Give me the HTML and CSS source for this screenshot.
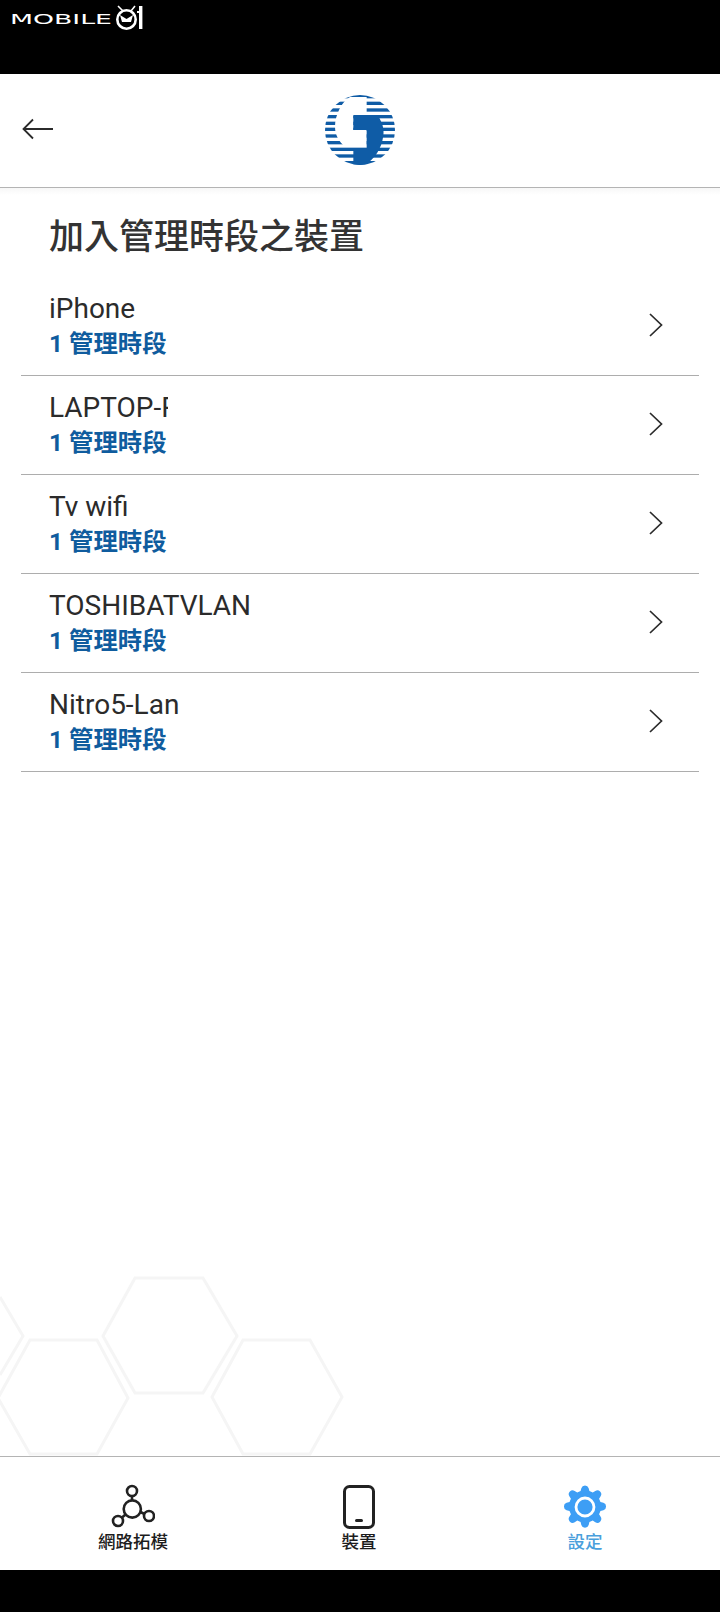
FILE: index.html
```html
<!DOCTYPE html>
<html lang="zh-Hant">

<head>
    <meta charset="UTF-8">
    <meta name="viewport" content="width=device-width, initial-scale=1.0">
    <title>加入管理時段之裝置</title>
    <link rel="stylesheet" href="styles.css">
</head>

<body>
    <div class="top-bar">
        <svg class="watermark" viewBox="0 0 145 32" width="145" height="32">
            <text x="10" y="23.5" class="watermark-text" textLength="102" lengthAdjust="spacingAndGlyphs">MOBILE</text>
            <circle cx="126.5" cy="19.5" r="9.2" fill="none" stroke="#fff" stroke-width="2.6"/>
            <path d="M118 6l5 5M135 6l-4 5" stroke="#fff" stroke-width="1.6" fill="none"/>
            <path d="M120 15l6.5 4 6.5-4-2 7h-9z" fill="#fff"/>
            <rect x="139" y="6" width="3.4" height="23" fill="#fff"/>
            <rect x="137" y="11" width="2" height="2" fill="#fff"/>
        </svg>
    </div>

    <header class="app-header">
        <button class="back-button" type="button" aria-label="返回">
            <svg viewBox="0 0 32 22" width="32" height="22">
                <path d="M31 11H2M11 1.5L1.5 11l9.5 9.5" fill="none" stroke="#2b2b2b" stroke-width="1.8"/>
            </svg>
        </button>
        <svg class="logo" viewBox="0 0 210 210" width="70" height="70">
            <defs>
                <clipPath id="logo-disc"><circle cx="105" cy="105" r="105"/></clipPath>
            </defs>
            <g clip-path="url(#logo-disc)">
                <g fill="#0f5ca6">
                    <rect y="0" width="210" height="10"/>
                    <rect y="20" width="210" height="10"/>
                    <rect y="40" width="210" height="10"/>
                    <rect y="60" width="210" height="10"/>
                    <rect y="80" width="210" height="10"/>
                    <rect y="98" width="210" height="10"/>
                    <rect y="118" width="210" height="10"/>
                    <rect y="138" width="210" height="10"/>
                    <rect y="158" width="210" height="10"/>
                    <rect y="178" width="210" height="10"/>
                    <rect y="198" width="210" height="12"/>
                </g>
                <path d="M125 6H75C50 20 30 60 30 95C30 120 42 138 58 153H125V105H85V58H125Z" fill="#fff"/>
                <path d="M85 63H160C172 85 178 100 175 122C170 160 150 190 120 210H85V165H125V105H85Z" fill="#0f5ca6"/>
            </g>
        </svg>
    </header>

    <main class="content">
        <svg class="hex-bg" viewBox="0 0 360 200" width="360" height="200">
            <g fill="none" stroke="#f5f5f5" stroke-width="3">
                <path d="M135 22H203L237 80L203 137H135L103 80Z"/>
                <path d="M30 84H97L128 142L97 198H30L-2 142Z"/>
                <path d="M243 84H310L342 141L310 198H243L212 141Z"/>
                <path d="M0 41L23 80L0 119"/>
            </g>
        </svg>

        <h1 class="page-title">加入管理時段之裝置</h1>

        <ul class="device-list">
            <li class="device-row">
                <div class="device-info">
                    <span class="device-name">iPhone</span>
                    <span class="device-sub">1 管理時段</span>
                </div>
                <svg class="chevron" viewBox="0 0 14 24" width="14" height="24"><path d="M1 1l11.5 11L1 23" fill="none" stroke="#2b2b2b" stroke-width="1.7"/></svg>
            </li>
            <li class="device-row">
                <div class="device-info">
                    <span class="device-name clipped">LAPTOP-RK3D</span>
                    <span class="device-sub">1 管理時段</span>
                </div>
                <svg class="chevron" viewBox="0 0 14 24" width="14" height="24"><path d="M1 1l11.5 11L1 23" fill="none" stroke="#2b2b2b" stroke-width="1.7"/></svg>
            </li>
            <li class="device-row">
                <div class="device-info">
                    <span class="device-name">Tv wifi</span>
                    <span class="device-sub">1 管理時段</span>
                </div>
                <svg class="chevron" viewBox="0 0 14 24" width="14" height="24"><path d="M1 1l11.5 11L1 23" fill="none" stroke="#2b2b2b" stroke-width="1.7"/></svg>
            </li>
            <li class="device-row">
                <div class="device-info">
                    <span class="device-name">TOSHIBATVLAN</span>
                    <span class="device-sub">1 管理時段</span>
                </div>
                <svg class="chevron" viewBox="0 0 14 24" width="14" height="24"><path d="M1 1l11.5 11L1 23" fill="none" stroke="#2b2b2b" stroke-width="1.7"/></svg>
            </li>
            <li class="device-row">
                <div class="device-info">
                    <span class="device-name">Nitro5-Lan</span>
                    <span class="device-sub">1 管理時段</span>
                </div>
                <svg class="chevron" viewBox="0 0 14 24" width="14" height="24"><path d="M1 1l11.5 11L1 23" fill="none" stroke="#2b2b2b" stroke-width="1.7"/></svg>
            </li>
        </ul>
    </main>

    <nav class="tab-bar">
        <a class="tab">
            <svg viewBox="0 0 44 46" width="44" height="46">
                <g fill="none" stroke="#222" stroke-width="2.6">
                    <circle cx="21" cy="7" r="5"/>
                    <circle cx="21.3" cy="25" r="8.6"/>
                    <circle cx="7" cy="37" r="5"/>
                    <circle cx="38" cy="32" r="5"/>
                    <path d="M21 12v4.5M14.5 30.5L11 33.5M29.5 28l4 2"/>
                </g>
            </svg>
            <span class="tab-label">網路拓模</span>
        </a>
        <a class="tab">
            <svg viewBox="0 0 44 46" width="44" height="46">
                <rect x="7.5" y="2.5" width="29" height="41" rx="5" fill="none" stroke="#222" stroke-width="3"/>
                <rect x="18" y="35" width="8" height="3" rx="1.5" fill="#222"/>
            </svg>
            <span class="tab-label">裝置</span>
        </a>
        <a class="tab active">
            <svg viewBox="0 0 44 46" width="44" height="46">
                <path transform="translate(22 23) scale(.92) translate(-22 -23)" d="M18 2.5a4.2 4.2 0 0 1 8 0l.8 3.2 3.6 1.5 2.8-1.7a4.2 4.2 0 0 1 5.8 5.8l-1.7 2.8 1.5 3.6 3.2.8a4.2 4.2 0 0 1 0 8l-3.2.8-1.5 3.6 1.7 2.8a4.2 4.2 0 0 1-5.8 5.8l-2.8-1.7-3.6 1.5-.8 3.2a4.2 4.2 0 0 1-8 0l-.8-3.2-3.6-1.5-2.8 1.7a4.2 4.2 0 0 1-5.8-5.8l1.7-2.8-1.5-3.6-3.2-.8a4.2 4.2 0 0 1 0-8l3.2-.8 1.5-3.6-1.7-2.8a4.2 4.2 0 0 1 5.8-5.8l2.8 1.7 3.6-1.5z" fill="#3d9ef5"/>
                <circle cx="22" cy="23" r="9" fill="none" stroke="#fff" stroke-width="2.8"/>
            </svg>
            <span class="tab-label">設定</span>
        </a>
    </nav>

    <div class="bottom-bar"></div>
</body>

</html>
```

FILE: styles.css
```css
* {
    box-sizing: border-box;
}

html,
body {
    height: 100%;
}

body {
    margin: 0;
    display: flex;
    flex-direction: column;
    background: #fff;
    color: #2b2b2b;
    font-family: Roboto, "Noto Sans CJK TC", sans-serif;
}

.top-bar {
    height: 74px;
    flex: none;
    background: #000;
}

.watermark {
    display: block;
}

.watermark-text {
    font-family: "DejaVu Sans", sans-serif;
    font-size: 13.5px;
    fill: #fff;
}

.app-header {
    position: relative;
    height: 114px;
    flex: none;
    display: flex;
    align-items: center;
    justify-content: center;
    padding-bottom: 1px;
    border-bottom: 1px solid #b4b4b4;
}

.back-button {
    position: absolute;
    left: 22px;
    top: 44px;
    padding: 0;
    border: none;
    background: none;
    line-height: 0;
}

.logo {
    display: block;
}

.content {
    position: relative;
    flex: 1;
    background: linear-gradient(to bottom, #f7f7f7, #fff 7px);
}

.hex-bg {
    position: absolute;
    left: 0;
    bottom: 0;
}

.page-title {
    position: relative;
    margin: 0;
    height: 89px;
    padding: 20px 0 0 49px;
    font-family: "Noto Sans CJK TC", sans-serif;
    font-size: 35px;
    line-height: 52px;
    font-weight: 500;
    color: #333;
}

.device-list {
    position: relative;
    margin: 0 21px;
    padding: 0;
    list-style: none;
}

.device-row {
    height: 99px;
    display: flex;
    align-items: center;
    justify-content: space-between;
    padding: 0 36px 0 28px;
    border-bottom: 1px solid #adadad;
}

.device-info {
    display: flex;
    flex-direction: column;
}

.device-name {
    font-size: 28px;
    line-height: 34px;
    white-space: nowrap;
}

.device-name.clipped {
    width: 119px;
    overflow: hidden;
}

.device-sub {
    font-size: 24.4px;
    line-height: 35px;
    font-weight: 700;
    color: #0f5c9e;
}

.chevron {
    display: block;
    margin-bottom: 3px;
}

.tab-bar {
    flex: none;
    height: 114px;
    display: grid;
    grid-template-columns: repeat(3, 1fr);
    padding: 27px 22px 0 20px;
    background: #fff;
    border-top: 1px solid #b4b4b4;
}

.tab {
    display: flex;
    flex-direction: column;
    align-items: center;
    color: #1c1c1c;
}

.tab svg {
    display: block;
}

.tab-label {
    font-family: "Noto Sans CJK TC", sans-serif;
    font-size: 17.5px;
    line-height: 22px;
    font-weight: 500;
}

.tab.active {
    color: #4a9fdc;
}

.bottom-bar {
    flex: none;
    height: 42px;
    background: #000;
}
```
